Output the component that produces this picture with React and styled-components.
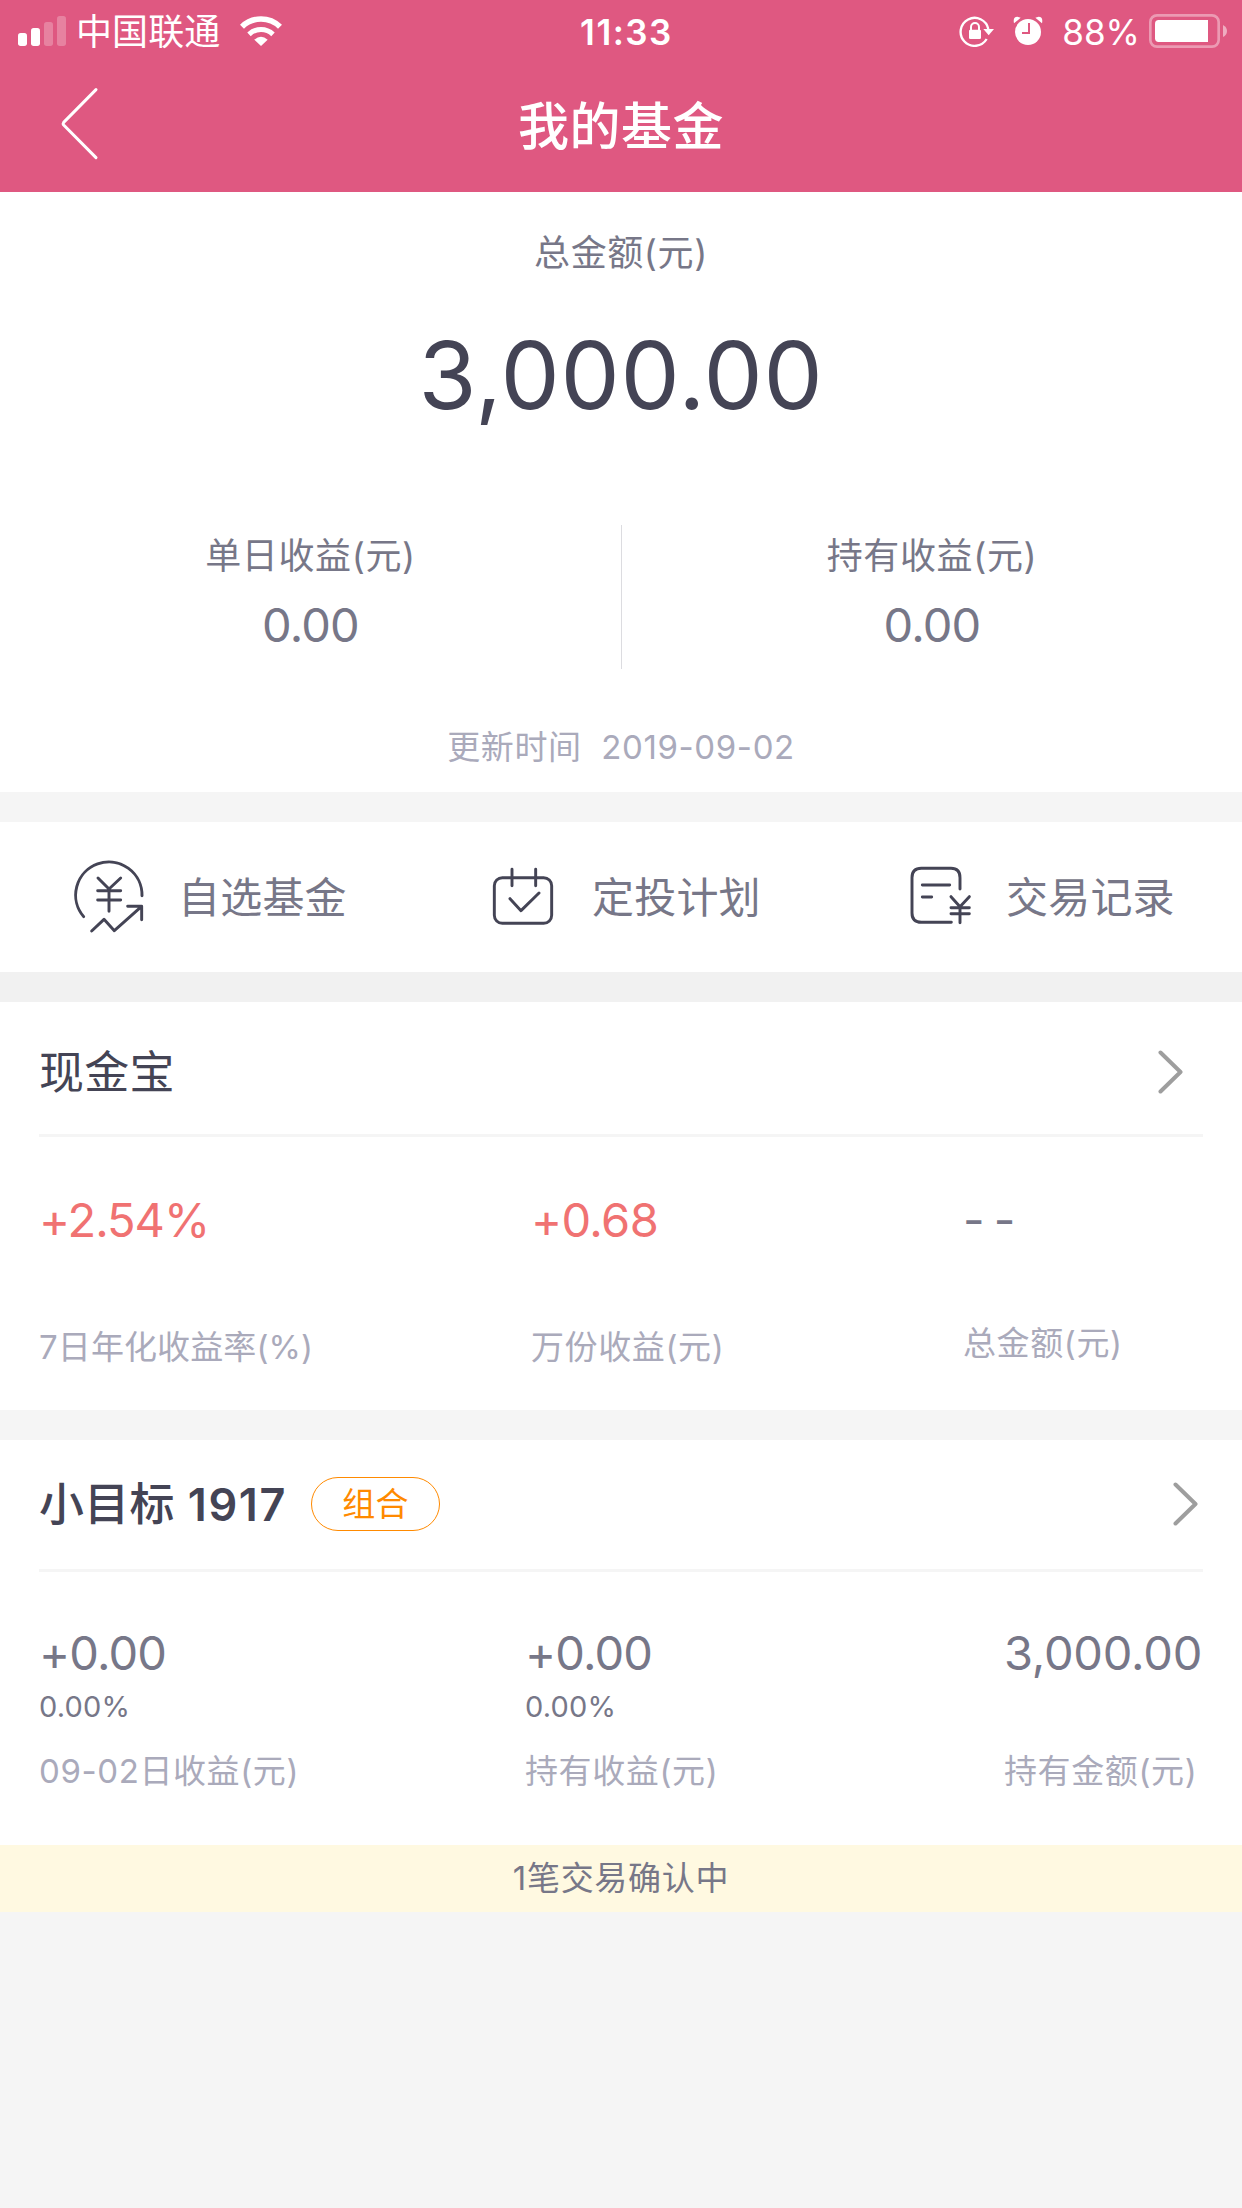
import React from "react";
import styled, { createGlobalStyle } from "styled-components";

const Global = createGlobalStyle`
  * { box-sizing: border-box; }
  body {
    margin: 0;
    background: #f5f5f5;
    font-family: Inter, "Noto Sans CJK SC", sans-serif;
    -webkit-font-smoothing: antialiased;
  }
  svg { display: block; flex: none; }
`;

const Screen = styled.div`
  width: 1242px;
  min-height: 2208px;
  background: #f5f5f5;
  color: #777788;
`;

const Header = styled.header`
  height: 192px;
  background: #df5881;
  color: #fff;
`;

const StatusBar = styled.div`
  display: grid;
  grid-template-columns: 1fr auto 1fr;
  align-items: center;
  height: 60px;
  padding: 0 15px 0 18px;
`;

const StatusSide = styled.div`
  display: flex;
  align-items: center;
  justify-content: ${(p) => (p.$end ? "flex-end" : "flex-start")};
  font-size: 35px;
  line-height: 60px;
`;

const Carrier = styled.span`
  margin: 2px 20px 0 10px;
  font-size: 36px;
  font-weight: 390;
  letter-spacing: 0.1px;
`;

const Clock = styled.time`
  padding-left: 8px;
  padding-top: 1px;
  font-size: 35px;
  font-weight: 600;
  letter-spacing: 1.5px;
`;

const Indicators = styled.span`
  display: flex;
  align-items: center;
  gap: 18px;
`;

const Battery = styled.span`
  margin: 1px 9px 0 19px;
  font-weight: 370;
  letter-spacing: 0;
`;

const NavBar = styled.nav`
  display: grid;
  grid-template-columns: 160px 1fr 160px;
  align-items: center;
  height: 132px;
`;

const BackButton = styled.button`
  display: flex;
  width: 160px;
  height: 132px;
  padding: 27px 0 0 60px;
  border: 0;
  background: none;
`;

const NavTitle = styled.h1`
  margin: 0;
  padding-top: 1px;
  text-align: center;
  font-size: 51px;
  font-weight: 500;
  line-height: 131px;
  letter-spacing: 0.5px;
`;

const Summary = styled.section`
  display: flex;
  flex-direction: column;
  align-items: center;
  height: 600px;
  padding-top: 35px;
  background: #fff;
`;

const Label = styled.div`
  margin: ${(p) => (p.$drop ? "1px 0 -1px" : 0)};
  font-size: ${(p) => p.$size || 33}px;
  font-weight: 390;
  line-height: 50px;
  letter-spacing: ${(p) => p.$track || 0}px;
  color: ${(p) => (p.$muted ? "#aaaabb" : "#777788")};
  white-space: pre;
`;

const Total = styled.div`
  margin-top: 43px;
  font-size: 94px;
  line-height: 110px;
  letter-spacing: 0.7px;
  color: #444455;
`;

const Stats = styled.div`
  display: grid;
  grid-template-columns: 1fr 1fr;
  width: 100%;
  height: 144px;
  margin: 95px 0 53px;
`;

const Stat = styled.div`
  display: flex;
  flex-direction: column;
  align-items: center;
  gap: 15px;
  padding-top: 5px;

  & + & {
    border-left: 1px solid #dcdce0;
  }
`;

const Value = styled.div`
  font-size: 47px;
  line-height: 60px;
  letter-spacing: ${(p) => p.$track ?? -0.8}px;
  color: ${(p) => (p.$up ? "#f07272" : "#777788")};
  white-space: pre;
`;

const Gap = styled.div`
  height: 30px;
  background: ${(p) => (p.$dark ? "#f1f1f1" : "#f5f5f5")};
`;

const Shortcuts = styled.nav`
  display: grid;
  grid-template-columns: repeat(3, 1fr);
  height: 150px;
  background: #fff;
`;

const Shortcut = styled.a`
  display: flex;
  align-items: center;
  gap: 28px;
  padding-left: 70px;
  font-size: 42px;
  font-weight: 390;
  line-height: 60px;
  letter-spacing: 0.2px;
  white-space: nowrap;
`;

const ShortcutText = styled.span`
  padding-top: 2px;
`;

const Card = styled.section`
  padding: 0 39px;
  height: ${(p) => p.$height}px;
  background: #fff;
`;

const CardHead = styled.div`
  display: flex;
  align-items: center;
  height: ${(p) => p.$height}px;
  padding: ${(p) => p.$pad};
  border-bottom: 3px solid #f5f5f5;
`;

const CardTitle = styled.h2`
  flex: ${(p) => (p.$tagged ? "none" : 1)};
  margin: 0;
  padding-top: 2px;
  font-size: 45px;
  font-weight: ${(p) => (p.$tagged ? 500 : 390)};
  line-height: 60px;
  letter-spacing: 0.2px;
  color: #444455;
`;

const Series = styled.span`
  margin-left: 1px;
  font-weight: 600;
  letter-spacing: 1.6px;
`;

const Tag = styled.span`
  width: 129px;
  height: 54px;
  margin: 0 auto 0 24px;
  border: 1.5px solid #ff8a00;
  border-radius: 27px;
  text-align: center;
  font-size: 33px;
  font-weight: 390;
  line-height: 53px;
  letter-spacing: 0.3px;
  color: #ff8a00;
`;

const Columns = styled.div`
  display: grid;
  grid-template-columns: ${(p) => p.$cols};
`;

const Metric = styled.div`
  display: flex;
  flex-direction: column;
  gap: ${(p) => p.$gap}px;
  padding-top: ${(p) => p.$top}px;
`;

const Percent = styled.div`
  margin: 4px 0 19px;
  height: 40px;
  font-size: 29px;
  line-height: 40px;
  letter-spacing: 0.2px;
`;

const Notice = styled.div`
  height: 67px;
  background: #fff9e1;
  text-align: center;
  font-size: 33px;
  font-weight: 390;
  line-height: 66px;
  letter-spacing: 0.7px;
`;

const SignalIcon = () => (
  <svg width="48" height="30" viewBox="54 45 144 90" fill="#fff">
    <rect x="54" y="96" width="27" height="39" rx="8" />
    <rect x="93" y="81" width="27" height="54" rx="8" />
    <rect x="132" y="63" width="27" height="72" rx="8" opacity=".25" />
    <rect x="171" y="45" width="27" height="90" rx="8" opacity=".25" />
  </svg>
);

const WifiIcon = () => (
  <svg width="42" height="30" viewBox="720 45 126 90" fill="none" stroke="#fff">
    <path d="M726 77 A82 82 0 0 1 840 77" strokeWidth="17" />
    <path d="M747 100 A52 52 0 0 1 819 100" strokeWidth="15" />
    <path d="M783 135 L763 116 Q783 98 803 116 Z" fill="#fff" stroke="none" />
  </svg>
);

const LockIcon = () => (
  <svg width="36" height="32" viewBox="183 42 108 96" fill="none" stroke="#fff">
    <path d="M266 114 A42 42 0 1 1 271 84" strokeWidth="7" />
    <path d="M256 84 H288 L272 103 Z" fill="#fff" stroke="none" />
    <rect x="213" y="86" width="36" height="28" rx="4" fill="#fff" stroke="none" />
    <path d="M219 88 V78 A12 12 0 0 1 243 78 V88" strokeWidth="6" />
  </svg>
);

const AlarmIcon = () => (
  <svg width="30" height="30" viewBox="345 45 90 90" fill="#fff">
    <circle cx="390" cy="93" r="39" />
    <path d="M348 67 Q344 47 358 47 L368 50 Z M432 67 Q436 47 422 47 L412 50 Z" />
    <path d="M393 66 V96 H372" fill="none" stroke="#df5881" strokeWidth="6" />
  </svg>
);

const BatteryIcon = () => (
  <svg width="78" height="34" viewBox="747 39 234 102">
    <rect x="751" y="43" width="205" height="94" rx="20" fill="none" stroke="#fff" strokeOpacity=".4" strokeWidth="8" />
    <path d="M776 57 H924 V123 H776 Q765 123 765 112 V68 Q765 57 776 57 Z" fill="#fff" />
    <path d="M969 72 Q981 78 981 90 Q981 102 969 108 Z" fill="#fff" fillOpacity=".5" />
  </svg>
);

const BackIcon = () => (
  <svg width="39" height="73" viewBox="180 264 117 219" fill="none" stroke="#fff" strokeWidth="9" strokeLinecap="round" strokeLinejoin="round">
    <path d="M288 272 L191 370 Q188 374 191 378 L288 476" />
  </svg>
);

const ChevronIcon = () => (
  <svg width="25" height="44" viewBox="0 0 25 44" fill="none" stroke="#9e9e9e" strokeWidth="4" strokeLinecap="round" strokeLinejoin="round">
    <path d="M2.5 2.5 L22.5 22 L2.5 41.5" />
  </svg>
);

const LineIcon = ({ x, children }) => (
  <svg width="80" height="80" viewBox={`${x} 81 240 240`} fill="none" stroke="#444455" strokeWidth="8.8" strokeLinecap="round" strokeLinejoin="round">
    {children}
  </svg>
);

const FundIcon = () => (
  <LineIcon x={90}>
    <path d="M131 260 A99.5 99.5 0 1 1 306 197" />
    <path d="M174 144 L207 177 L242 144 M207 177 V244 M173 182 H242 M173 210 H242" />
    <path d="M155 303 L192 268 L223 302 L304 230 M263 229 H305 V269" />
  </LineIcon>
);

const PlanIcon = () => (
  <LineIcon x={72}>
    <rect x="103" y="143" width="172" height="137" rx="24" />
    <path d="M156 118 V167 M227 118 V167 M150 206 L183 242 L237 189" />
  </LineIcon>
);

const RecordIcon = () => (
  <LineIcon x={54}>
    <path d="M240 177 V143 Q240 115 213 115 H124 Q96 115 96 143 V249 Q96 277 124 277 H214" />
    <path d="M127 165 H209 M127 201 H155" />
    <path d="M213 200 L240 230 L268 200 M240 230 V278 M213 233 H268 M213 251 H268" />
  </LineIcon>
);

export default function App() {
  return (
    <Screen>
      <Global />
      <Header>
        <StatusBar>
          <StatusSide>
            <SignalIcon />
            <Carrier>中国联通</Carrier>
            <WifiIcon />
          </StatusSide>
          <Clock>11:33</Clock>
          <StatusSide $end>
            <Indicators>
              <LockIcon />
              <AlarmIcon />
            </Indicators>
            <Battery>88%</Battery>
            <BatteryIcon />
          </StatusSide>
        </StatusBar>
        <NavBar>
          <BackButton aria-label="返回">
            <BackIcon />
          </BackButton>
          <NavTitle>我的基金</NavTitle>
        </NavBar>
      </Header>

      <Summary>
        <Label $drop $size={36} $track={0.6}>总金额(元)</Label>
        <Total>3,000.00</Total>
        <Stats>
          <Stat>
            <Label $drop $size={36} $track={0.6}>单日收益(元)</Label>
            <Value>0.00</Value>
          </Stat>
          <Stat>
            <Label $drop $size={36} $track={0.6}>持有收益(元)</Label>
            <Value>0.00</Value>
          </Stat>
        </Stats>
        <Label $muted $track={0.6}>更新时间  2019-09-02</Label>
      </Summary>

      <Gap />
      <Shortcuts>
        <Shortcut><FundIcon /><ShortcutText>自选基金</ShortcutText></Shortcut>
        <Shortcut><PlanIcon /><ShortcutText>定投计划</ShortcutText></Shortcut>
        <Shortcut><RecordIcon /><ShortcutText>交易记录</ShortcutText></Shortcut>
      </Shortcuts>
      <Gap $dark />

      <Card $height={408}>
        <CardHead $height={135} $pad="7px 20px 0 0">
          <CardTitle>现金宝</CardTitle>
          <ChevronIcon />
        </CardHead>
        <Columns $cols="492px 432px 1fr">
          <Metric $top={53} $gap={71}>
            <Value $up $track={-1}>+2.54%</Value>
            <Label $drop $muted $track={0.1}>7日年化收益率(%)</Label>
          </Metric>
          <Metric $top={53} $gap={71}>
            <Value $up $track={-0.6}>+0.68</Value>
            <Label $drop $muted $track={0.6}>万份收益(元)</Label>
          </Metric>
          <Metric $top={53} $gap={67}>
            <Value $track={-2}>- -</Value>
            <Label $drop $muted $track={0.6}>总金额(元)</Label>
          </Metric>
        </Columns>
      </Card>

      <Gap />
      <Card $height={405}>
        <CardHead $height={132} $pad="0 5px 2px 0">
          <CardTitle $tagged>小目标 <Series>1917</Series></CardTitle>
          <Tag>组合</Tag>
          <ChevronIcon />
        </CardHead>
        <Columns $cols="486px 479px 1fr">
          <Metric $top={51} $gap={0}>
            <Value>+0.00</Value>
            <Percent>0.00%</Percent>
            <Label $muted $track={0.6}>09-02日收益(元)</Label>
          </Metric>
          <Metric $top={51} $gap={0}>
            <Value>+0.00</Value>
            <Percent>0.00%</Percent>
            <Label $muted $track={0.6}>持有收益(元)</Label>
          </Metric>
          <Metric $top={51} $gap={0}>
            <Value $track={-0.2}>3,000.00</Value>
            <Percent />
            <Label $muted $track={0.6}>持有金额(元)</Label>
          </Metric>
        </Columns>
      </Card>
      <Notice>1笔交易确认中</Notice>
    </Screen>
  );
}
